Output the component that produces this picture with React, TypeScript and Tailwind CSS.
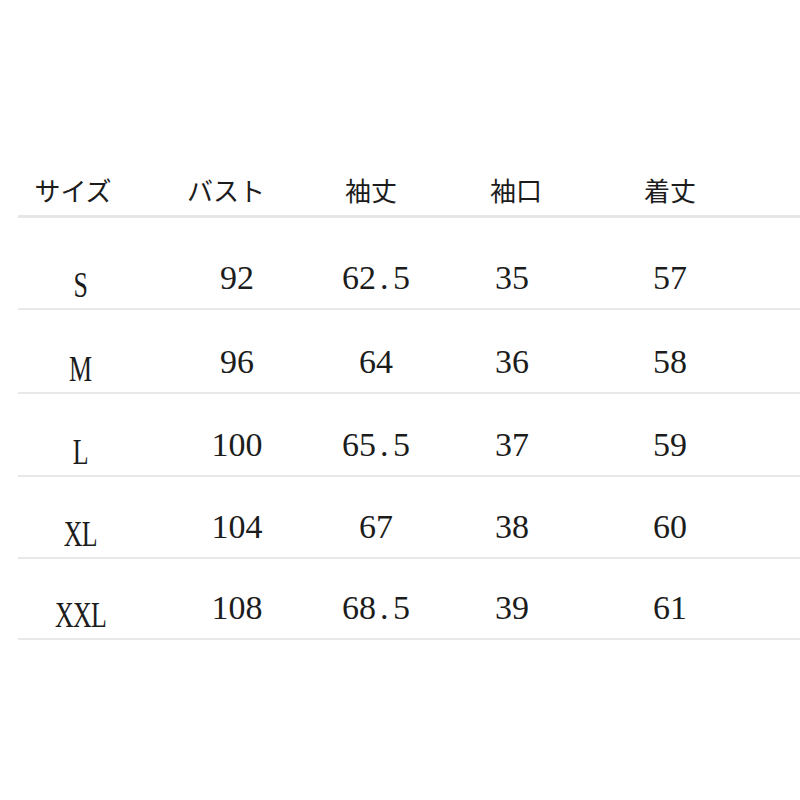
import React from "react";

type Row = { size: string; bust: string; sleeve: string; cuff: string; length: string; h: string };

const rows: Row[] = [
  { size: "S", bust: "92", sleeve: "62.5", cuff: "35", length: "57", h: "h-[92px]" },
  { size: "M", bust: "96", sleeve: "64", cuff: "36", length: "58", h: "h-[84px]" },
  { size: "L", bust: "100", sleeve: "65.5", cuff: "37", length: "59", h: "h-[83px]" },
  { size: "XL", bust: "104", sleeve: "67", cuff: "38", length: "60", h: "h-[82px]" },
  { size: "XXL", bust: "108", sleeve: "68.5", cuff: "39", length: "61", h: "h-[81px]" },
];

const cols = "grid grid-cols-[120px_198px_80px_192px_124px_1fr]";
const serif = "font-['Liberation_Serif','Times_New_Roman',serif]";

// monospaced look: every char takes the same cell, like the original table font
const Num = ({ value }: { value: string }) => (
  <span className="inline-flex">
    {value.split("").map((c, i) =>
      c === "." ? (
        <span key={i} className="inline-block w-[17px] pl-[4px] text-left">
          .
        </span>
      ) : (
        <span key={i} className="inline-block w-[17px] text-center">
          {c}
        </span>
      )
    )}
  </span>
);

// the table font is narrow, so squeeze the serif letters as one label
const SizeLabel = ({ value }: { value: string }) => (
  <span className="inline-block text-[35px] tracking-[-1px] scale-x-[0.74] origin-center">{value}</span>
);

export default function App() {
  return (
    <div className="w-[800px] h-[800px] bg-white text-[#1c1c1c] overflow-hidden">
      <div className="ml-[18px] mt-[160px]">
        <div
          className={`${cols} h-[58px] items-end pb-[12px] border-b-[3px] border-[#e6e6e6] text-[26px] leading-none font-['Noto_Sans_CJK_JP',sans-serif]`}
        >
          <div className="text-center pr-[10px]">サイズ</div>
          <div className="text-center pr-[22px]">バスト</div>
          <div className="text-center pr-[10px]">袖丈</div>
          <div className="text-center pl-[8px]">袖口</div>
          <div className="text-center">着丈</div>
          <div />
        </div>
        {rows.map((r) => (
          <div
            key={r.size}
            className={`${cols} ${r.h} items-end border-b-2 border-[#e8e8e8] text-[34px] leading-none ${serif}`}
          >
            <div className="text-center pb-[5px] pl-[5px]">
              <SizeLabel value={r.size} />
            </div>
            <div className="text-center pb-[13px]">
              <Num value={r.bust} />
            </div>
            <div className="text-center pb-[13px]">
              <Num value={r.sleeve} />
            </div>
            <div className="text-center pb-[13px]">
              <Num value={r.cuff} />
            </div>
            <div className="text-center pb-[13px]">
              <Num value={r.length} />
            </div>
            <div />
          </div>
        ))}
      </div>
    </div>
  );
}
